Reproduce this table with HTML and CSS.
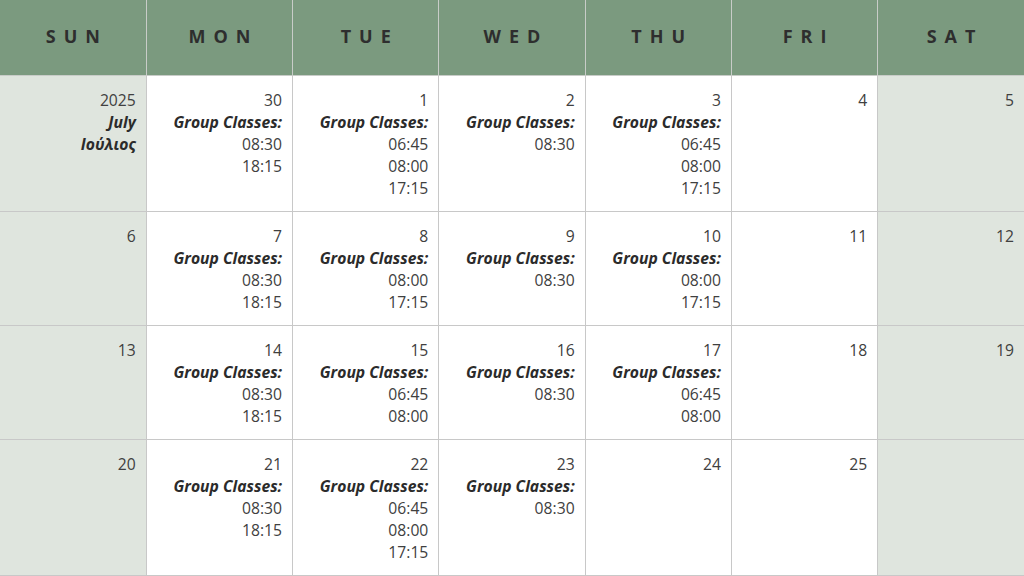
FILE: index.html
```html
<!DOCTYPE html>
<html lang="en">

<head>
    <meta charset="UTF-8">
    <meta name="viewport" content="width=device-width, initial-scale=1.0">
    <title>Group Classes - July 2025</title>
    <link rel="stylesheet" href="styles.css">
</head>

<body>
    <table class="calendar">
        <thead>
            <tr>
                <th>SUN</th>
                <th>MON</th>
                <th>TUE</th>
                <th>WED</th>
                <th>THU</th>
                <th>FRI</th>
                <th>SAT</th>
            </tr>
        </thead>
        <tbody>
            <tr>
                <td class="weekend">
                    <div class="date">2025</div>
                    <div class="label">July</div>
                    <div class="label">Ιούλιος</div>
                </td>
                <td>
                    <div class="date">30</div>
                    <div class="label">Group Classes:</div>
                    <div>08:30</div>
                    <div>18:15</div>
                </td>
                <td>
                    <div class="date">1</div>
                    <div class="label">Group Classes:</div>
                    <div>06:45</div>
                    <div>08:00</div>
                    <div>17:15</div>
                </td>
                <td>
                    <div class="date">2</div>
                    <div class="label">Group Classes:</div>
                    <div>08:30</div>
                </td>
                <td>
                    <div class="date">3</div>
                    <div class="label">Group Classes:</div>
                    <div>06:45</div>
                    <div>08:00</div>
                    <div>17:15</div>
                </td>
                <td>
                    <div class="date">4</div>
                </td>
                <td class="weekend">
                    <div class="date">5</div>
                </td>
            </tr>
            <tr>
                <td class="weekend">
                    <div class="date">6</div>
                </td>
                <td>
                    <div class="date">7</div>
                    <div class="label">Group Classes:</div>
                    <div>08:30</div>
                    <div>18:15</div>
                </td>
                <td>
                    <div class="date">8</div>
                    <div class="label">Group Classes:</div>
                    <div>08:00</div>
                    <div>17:15</div>
                </td>
                <td>
                    <div class="date">9</div>
                    <div class="label">Group Classes:</div>
                    <div>08:30</div>
                </td>
                <td>
                    <div class="date">10</div>
                    <div class="label">Group Classes:</div>
                    <div>08:00</div>
                    <div>17:15</div>
                </td>
                <td>
                    <div class="date">11</div>
                </td>
                <td class="weekend">
                    <div class="date">12</div>
                </td>
            </tr>
            <tr>
                <td class="weekend">
                    <div class="date">13</div>
                </td>
                <td>
                    <div class="date">14</div>
                    <div class="label">Group Classes:</div>
                    <div>08:30</div>
                    <div>18:15</div>
                </td>
                <td>
                    <div class="date">15</div>
                    <div class="label">Group Classes:</div>
                    <div>06:45</div>
                    <div>08:00</div>
                </td>
                <td>
                    <div class="date">16</div>
                    <div class="label">Group Classes:</div>
                    <div>08:30</div>
                </td>
                <td>
                    <div class="date">17</div>
                    <div class="label">Group Classes:</div>
                    <div>06:45</div>
                    <div>08:00</div>
                </td>
                <td>
                    <div class="date">18</div>
                </td>
                <td class="weekend">
                    <div class="date">19</div>
                </td>
            </tr>
            <tr>
                <td class="weekend">
                    <div class="date">20</div>
                </td>
                <td>
                    <div class="date">21</div>
                    <div class="label">Group Classes:</div>
                    <div>08:30</div>
                    <div>18:15</div>
                </td>
                <td>
                    <div class="date">22</div>
                    <div class="label">Group Classes:</div>
                    <div>06:45</div>
                    <div>08:00</div>
                    <div>17:15</div>
                </td>
                <td>
                    <div class="date">23</div>
                    <div class="label">Group Classes:</div>
                    <div>08:30</div>
                </td>
                <td>
                    <div class="date">24</div>
                </td>
                <td>
                    <div class="date">25</div>
                </td>
                <td class="weekend"></td>
            </tr>
        </tbody>
    </table>
</body>

</html>
```

FILE: styles.css
```css
body {
    font-family: "Open Sans", Arial, sans-serif;
    margin: 0;
    padding: 0;
    background-color: #ffffff;
    color: #404040;
}

.calendar {
    width: 100%;
    border-collapse: collapse;
    table-layout: fixed;
}

.calendar th {
    height: 72px;
    padding: 0 0 3px 8px;
    background-color: #7b9a7f;
    color: #2e2e2e;
    font-size: 18px;
    font-weight: 700;
    letter-spacing: 8px;
    text-align: center;
    border-left: 1px solid #c8ccc8;
    border-bottom: 1px solid #c8ccc8;
}

.calendar td {
    padding: 13px 10px 12px 10px;
    vertical-align: top;
    text-align: right;
    font-size: 15.7px;
    line-height: 22px;
    border-left: 1px solid #c8c8c8;
    border-bottom: 1px solid #c8c8c8;
}

.calendar th:first-child,
.calendar td:first-child {
    border-left: none;
}

.weekend {
    background-color: #dfe5de;
}

.label {
    font-weight: 700;
    font-style: italic;
    color: #2b2b2b;
}
```
